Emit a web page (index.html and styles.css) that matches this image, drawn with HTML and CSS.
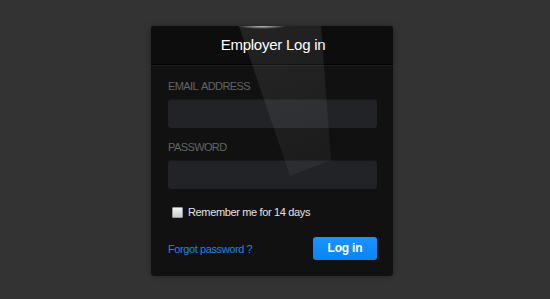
FILE: index.html
```html
<!DOCTYPE html>
<html>
<head>
<meta charset="utf-8">
<link rel="stylesheet" href="styles.css">
</head>
<body>
<div class="page">
  <div class="card">
    <div class="shine"></div>
    <div class="flare"></div>
    <div class="card-header"><h1 class="title">Employer Log in</h1></div>
    <form class="form">
      <label class="label">EMAIL ADDRESS</label>
      <div class="input"></div>
      <label class="label label-second">PASSWORD</label>
      <div class="input"></div>
      <div class="remember">
        <span class="checkbox"></span>
        <span class="remember-text">Remember me for 14 days</span>
      </div>
      <div class="actions">
        <a class="forgot">Forgot password ?</a>
        <span class="button">Log in</span>
      </div>
    </form>
  </div>
</div>
</body>
</html>
```
FILE: styles.css
```css
html, body {
  margin: 0;
  padding: 0;
  height: 100%;
}
body {
  background: #333333;
  font-family: "Liberation Sans", Arial, sans-serif;
}
.page {
  padding: 26px 0 0 151px;
}
.card {
  position: relative;
  width: 242px;
  height: 250px;
  background: #111111;
  border-radius: 3px;
  box-shadow: 0 0 6px rgba(0,0,0,0.35);
  overflow: hidden;
}
.shine {
  position: absolute;
  left: 0;
  top: 0;
  width: 242px;
  height: 250px;
  background: linear-gradient(160deg, rgba(255,255,255,0.10), rgba(255,255,255,0.045) 60%, rgba(255,255,255,0.06));
  clip-path: polygon(88px 0, 170px 0, 180px 134px, 139px 150px);
  pointer-events: none;
  z-index: 2;
}
.flare {
  position: absolute;
  left: 86px;
  top: -3px;
  width: 50px;
  height: 6px;
  background: radial-gradient(ellipse at center, rgba(255,255,255,0.75), rgba(255,255,255,0) 70%);
  z-index: 3;
}
.card-header {
  height: 38px;
  border-bottom: 1px solid #000;
  box-shadow: 0 1px 0 #1f1f1f;
  background: #0d0d0d;
  display: flex;
  align-items: center;
  justify-content: center;
}
.title {
  margin: 0;
  color: #ffffff;
  font-size: 15px;
  letter-spacing: -0.25px;
  font-weight: normal;
  line-height: 20px;
  padding-left: 2px;
}
.form {
  display: flex;
  flex-direction: column;
  padding: 15px 16px 0 17px;
}
.label {
  display: block;
  color: #646464;
  font-size: 11px;
  letter-spacing: -0.6px;
  word-spacing: 1.5px;
  line-height: 13px;
  margin-bottom: 6px;
}
.label-second {
  margin-top: 13px;
}
.input {
  height: 29px;
  background: #222326;
  border-radius: 3px;
  box-shadow: inset 0 1px 1px rgba(0,0,0,0.3);
}
.remember {
  display: flex;
  align-items: center;
  margin-top: 17px;
  height: 12px;
}
.checkbox {
  width: 9px;
  height: 9px;
  margin-left: 4px;
  border: 1px solid #9a9a9a;
  background: linear-gradient(#f4f4f4, #c9c9c9);
  border-radius: 1px;
}
.remember-text {
  margin-left: 5px;
  color: #e4e4e4;
  font-size: 11px;
  letter-spacing: -0.35px;
  line-height: 14px;
}
.actions {
  display: flex;
  align-items: center;
  justify-content: space-between;
  margin-top: 19px;
}
.forgot {
  color: #1b87e0;
  font-size: 11px;
  letter-spacing: -0.4px;
  line-height: 14px;
  margin-top: 1px;
}
.button {
  width: 64px;
  height: 23px;
  background: linear-gradient(#1c93ff, #0a84f2);
  border-radius: 3px;
  color: #ffffff;
  font-size: 12px;
  letter-spacing: -0.2px;
  font-weight: bold;
  line-height: 23px;
  text-align: center;
}
```
